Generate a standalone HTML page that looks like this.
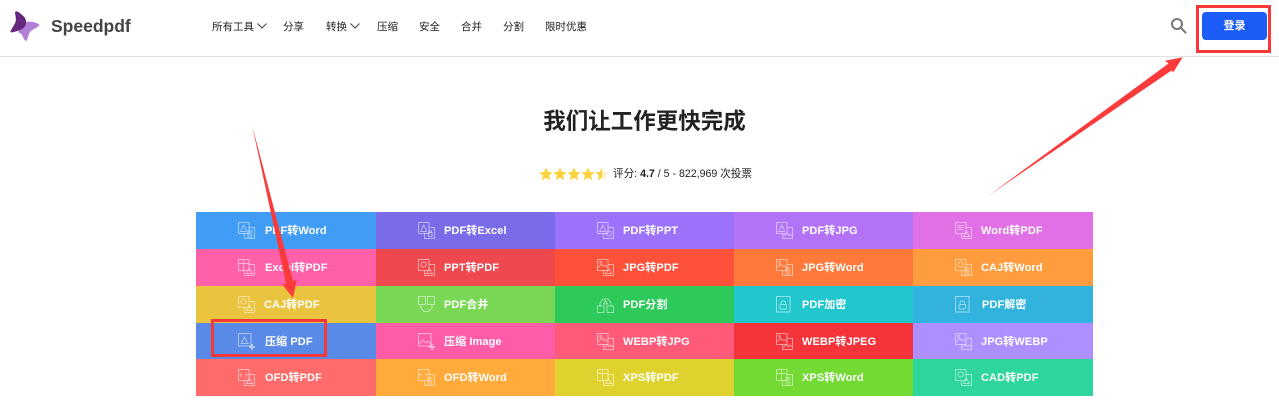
<!DOCTYPE html>
<html lang="zh"><head><meta charset="utf-8"><title>Speedpdf</title>
<style>
*{box-sizing:border-box}
html,body{margin:0;padding:0;background:#fff}
body{width:1279px;height:403px;position:relative;overflow:hidden;font-family:"Liberation Sans","Noto Sans CJK SC",sans-serif;color:#222}
.hd{position:absolute;left:0;top:0;width:1279px;height:57px;border-bottom:1px solid #e0e0e0}
.n{position:absolute;top:19px;font-size:10.5px;line-height:16px;color:#222;white-space:nowrap}
.logo{position:absolute;left:51px;top:15px;font-size:17.5px;line-height:22px;font-weight:bold;color:#444}
.btn{position:absolute;left:1202px;top:12px;width:65px;height:28px;background:#1b5cf7;border-radius:4px;color:#fff;font-size:11px;font-weight:bold;line-height:28px;text-align:center}
h1{position:absolute;left:0;width:1289px;top:106px;margin:0;text-align:center;font-size:22.5px;line-height:32px;font-weight:bold;color:#222}
.rt{position:absolute;left:613px;top:166px;font-size:10.6px;line-height:15px;white-space:nowrap;color:#222}
.c{position:absolute;color:#fff;font-size:11px;font-weight:bold}
.c span{position:absolute;left:69px;top:1px;line-height:37px;white-space:nowrap;letter-spacing:.1px}
.c svg{position:absolute;left:42px;top:10px;width:17px;height:17px;fill:none;stroke:#fff;stroke-opacity:.5;stroke-width:1}
.ov{position:absolute;left:0;top:0}
</style></head><body>
<svg width="0" height="0" style="position:absolute"><defs>
<g id="lp"><rect x=".5" y=".5" width="10.5" height="11"/><path d="M3 8.5L5.7 3.2L8.5 8.5M2 9.5h7"/></g>
<g id="li"><rect x=".5" y=".5" width="10.5" height="11"/><path d="M1.500 8.500L4.500 5L7 7.500L8.500 6.500L10.500 8.500"/><circle cx="3.500" cy="3.200" r=".8"/></g>
<g id="lw"><rect x=".5" y=".5" width="10.5" height="11"/><path d="M2.500 3.500h6M2.500 5.500h6M2.500 7.500h6"/></g>
<g id="lc"><rect x=".5" y=".5" width="10.5" height="11"/><circle cx="5.700" cy="5.500" r="2.600"/></g>
<g id="lt"><rect x=".5" y=".5" width="10.5" height="11"/><path d="M.5 4.500h10.500M5.500 1v10"/></g>
<g id="lf"><rect x=".5" y=".5" width="10.5" height="11"/><path d="M3.500 4.500L2 6l1.500 1.500M7.500 4.500L9 6L7.500 7.500"/></g>
<g id="rp"><path d="M11 5.500h5.500v11H6.500v-5"/><path d="M8.500 14.500L11.500 9.500L14.500 14.500z"/></g>
<g id="rw"><path d="M11 5.500h5.500v11H6.500v-5"/><path d="M9 9h5.500M9 11h5.500M9 13h5.500M9 15h5.500"/></g>
<g id="rx"><path d="M11 5.500h5.500v11H6.500v-5"/><rect x="10.500" y="10.500" width="3.500" height="4"/><path d="M11 10.500V9h2.500v1.500"/></g>
<g id="rq"><path d="M11 5.500h5.500v11H6.500v-5"/><circle cx="12" cy="11.500" r="2.500"/></g>
<g id="ri"><path d="M11 5.500h5.500v11H6.500v-5"/><path d="M7.500 14.500L10.500 11.500L12.500 13.500L14 12L16 14"/></g>
<g id="lock"><rect x=".5" y=".5" width="13.500" height="15.500"/><rect x="4" y="8.500" width="6.500" height="4.500" rx="1"/><path d="M5 8.500V7a2.200 2.200 0 0 1 4.500 0v1.500"/></g>
</defs></svg>

<div class="hd"></div>
<svg class="ov" width="46" height="46" viewBox="0 0 46 46">
<path d="M26 22C30 21 37 22 39.500 25C38 28 32 29 30 32C28 35 28 40 26 41C24 40 23 37 22 35C21 33 19 33 18 32Z" fill="#b080d6"/>
<path d="M15 12C17 10 20 13 22 15C25 17 26.500 20 26 23C25.500 28 21 30 17 31C14 32 11.500 33 10.500 32C10.500 30 14 26 15.500 22C16.500 18 15 15 15 12Z" fill="#64277e"/>
</svg>
<div class="logo">Speedpdf</div>
<div class="n" style="left:212px">所有工具</div>
<svg class="ov" style="left:257px;top:22px" width="10" height="8"><path d="M.5 1.500L5 6L9.500 1.500" fill="none" stroke="#444"/></svg>
<div class="n" style="left:283px">分享</div>
<div class="n" style="left:326px">转换</div>
<svg class="ov" style="left:350px;top:22px" width="10" height="8"><path d="M.5 1.500L5 6L9.500 1.500" fill="none" stroke="#444"/></svg>
<div class="n" style="left:377px">压缩</div>
<div class="n" style="left:419px">安全</div>
<div class="n" style="left:461px">合并</div>
<div class="n" style="left:503px">分割</div>
<div class="n" style="left:545px">限时优惠</div>
<svg class="ov" style="left:1170px;top:17px" width="18" height="18"><circle cx="7" cy="7" r="5" fill="none" stroke="#777" stroke-width="2"/><path d="M10.500 10.500L16 16" stroke="#777" stroke-width="2"/></svg>
<div class="btn">登录</div>

<h1>我们让工作更快完成</h1>
<svg class="ov" style="left:539px;top:167px" width="72" height="14" viewBox="0 0 72 14">
<defs><linearGradient id="hf"><stop offset=".5" stop-color="#fcd33f"/><stop offset=".5" stop-color="#fff3c0"/></linearGradient>
<path id="st" d="M7 .5L9 5L13.700 5.400L10.100 8.500L11.200 13.300L7 10.800L2.800 13.300L3.900 8.500L.3 5.400L5 5z"/></defs>
<use href="#st" fill="#fcd33f"/><use href="#st" x="14" fill="#fcd33f"/><use href="#st" x="28" fill="#fcd33f"/><use href="#st" x="42" fill="#fcd33f"/><use href="#st" x="56" fill="url(#hf)"/>
</svg>
<div class="rt" style="top:167px">评分: <b>4.7</b> / 5 - 822,969 次投票</div>

<div class="c" style="left:196px;top:212px;width:180px;height:37px;background:#409cf5"><svg viewBox="0 0 17 17"><use href="#lp"/><use href="#rw"/></svg><span>PDF转Word</span></div>
<div class="c" style="left:376px;top:212px;width:179px;height:37px;background:#7a6be9"><svg viewBox="0 0 17 17"><use href="#lp"/><use href="#rx"/></svg><span style="left:68px">PDF转Excel</span></div>
<div class="c" style="left:555px;top:212px;width:179px;height:37px;background:#9b72f9"><svg viewBox="0 0 17 17"><use href="#lp"/><use href="#rq"/></svg><span style="left:68px">PDF转PPT</span></div>
<div class="c" style="left:734px;top:212px;width:179px;height:37px;background:#b373f9"><svg viewBox="0 0 17 17"><use href="#lp"/><use href="#ri"/></svg><span style="left:68px">PDF转JPG</span></div>
<div class="c" style="left:913px;top:212px;width:180px;height:37px;background:#e16fe5"><svg viewBox="0 0 17 17"><use href="#lw"/><use href="#rp"/></svg><span style="left:68px">Word转PDF</span></div>

<div class="c" style="left:196px;top:249px;width:180px;height:37px;background:#ff60a8"><svg viewBox="0 0 17 17"><use href="#lt"/><use href="#rp"/></svg><span>Excel转PDF</span></div>
<div class="c" style="left:376px;top:249px;width:179px;height:37px;background:#f0484f"><svg viewBox="0 0 17 17"><use href="#lc"/><use href="#rp"/></svg><span style="left:68px">PPT转PDF</span></div>
<div class="c" style="left:555px;top:249px;width:179px;height:37px;background:#ff503a"><svg viewBox="0 0 17 17"><use href="#li"/><use href="#rp"/></svg><span style="left:68px">JPG转PDF</span></div>
<div class="c" style="left:734px;top:249px;width:179px;height:37px;background:#ff7a3a"><svg viewBox="0 0 17 17"><use href="#li"/><use href="#rw"/></svg><span style="left:68px">JPG转Word</span></div>
<div class="c" style="left:913px;top:249px;width:180px;height:37px;background:#ff9c3d"><svg viewBox="0 0 17 17"><use href="#lc"/><use href="#rw"/></svg><span style="left:68px">CAJ转Word</span></div>

<div class="c" style="left:196px;top:286px;width:180px;height:37px;background:#eac43e"><svg viewBox="0 0 17 17"><use href="#lc"/><use href="#rp"/></svg><span style="left:68px">CAJ转PDF</span></div>
<div class="c" style="left:376px;top:286px;width:179px;height:37px;background:#7ad655"><svg viewBox="0 0 17 17"><rect x=".5" y=".5" width="7" height="8"/><rect x="9.500" y=".5" width="7" height="8"/><path d="M3 9v3l3 3.500h5l3-3.500V9"/></svg><span style="left:68px">PDF合并</span></div>
<div class="c" style="left:555px;top:286px;width:179px;height:37px;background:#2ec95b"><svg viewBox="0 0 17 17"><rect x=".5" y="10" width="6.500" height="6.500"/><rect x="10" y="10" width="6.500" height="6.500"/><path d="M3 10V7l3-4h5l3 4v3M6.500 8L8.500 4.500L10.500 8z"/></svg><span style="left:68px">PDF分割</span></div>
<div class="c" style="left:734px;top:286px;width:179px;height:37px;background:#22c7cd"><svg viewBox="0 0 17 17"><use href="#lock"/></svg><span style="left:68px">PDF加密</span></div>
<div class="c" style="left:913px;top:286px;width:180px;height:37px;background:#32b3de"><svg viewBox="0 0 17 17"><use href="#lock"/></svg><span style="left:69px">PDF解密</span></div>

<div class="c" style="left:196px;top:323px;width:180px;height:36px;background:#5a8ae8"><svg viewBox="0 0 17 17"><rect x=".5" y=".5" width="12.500" height="12.500"/><path d="M3.500 9.500L6.500 4L9.500 9.500M2.500 10.500h8"/><path d="M14 11v6M11 14h6" stroke-width="2"/></svg><span style="line-height:36px">压缩 PDF</span></div>
<div class="c" style="left:376px;top:323px;width:179px;height:36px;background:#ff5ca8"><svg viewBox="0 0 17 17"><rect x=".5" y=".5" width="12.500" height="12.500"/><path d="M1 11L5 7L8 10L10 8L13 11"/><path d="M14 11v6M11 14h6" stroke-width="2"/></svg><span style="left:68px;line-height:36px">压缩 Image</span></div>
<div class="c" style="left:555px;top:323px;width:179px;height:36px;background:#ff5a78"><svg viewBox="0 0 17 17"><use href="#li"/><use href="#ri"/></svg><span style="left:68px;line-height:36px">WEBP转JPG</span></div>
<div class="c" style="left:734px;top:323px;width:179px;height:36px;background:#f5333b"><svg viewBox="0 0 17 17"><use href="#li"/><use href="#ri"/></svg><span style="left:68px;line-height:36px">WEBP转JPEG</span></div>
<div class="c" style="left:913px;top:323px;width:180px;height:36px;background:#ae8fff"><svg viewBox="0 0 17 17"><use href="#li"/><use href="#ri"/></svg><span style="left:68px;line-height:36px">JPG转WEBP</span></div>

<div class="c" style="left:196px;top:359px;width:180px;height:37px;background:#ff6a6a"><svg viewBox="0 0 17 17"><use href="#lf"/><use href="#rp"/></svg><span>OFD转PDF</span></div>
<div class="c" style="left:376px;top:359px;width:179px;height:37px;background:#ffaa3a"><svg viewBox="0 0 17 17"><use href="#lf"/><use href="#rw"/></svg><span style="left:68px">OFD转Word</span></div>
<div class="c" style="left:555px;top:359px;width:179px;height:37px;background:#e0d22e"><svg viewBox="0 0 17 17"><use href="#lt"/><use href="#rp"/></svg><span style="left:68px">XPS转PDF</span></div>
<div class="c" style="left:734px;top:359px;width:179px;height:37px;background:#72da33"><svg viewBox="0 0 17 17"><use href="#lt"/><use href="#rw"/></svg><span style="left:68px">XPS转Word</span></div>
<div class="c" style="left:913px;top:359px;width:180px;height:37px;background:#2ed69c"><svg viewBox="0 0 17 17"><use href="#lc"/><use href="#rp"/></svg><span style="left:68px">CAD转PDF</span></div>

<svg class="ov" width="1279" height="403" viewBox="0 0 1279 403">
<rect x="1197.500" y="6.500" width="72" height="45" fill="none" stroke="#f63838" stroke-width="3"/>
<rect x="212.500" y="320.500" width="113" height="35" fill="none" stroke="#f63838" stroke-width="3"/>
<path d="M252 125L286 283L282.700 285L293 298L296.700 280L293 281Z" fill="#fb3b3b"/>
<path d="M988 196L1168.500 63.500L1165 60.700L1182.700 57.300L1173.300 72.300L1171.500 70.500Z" fill="#fb3b3b"/>
</svg>
</body></html>
